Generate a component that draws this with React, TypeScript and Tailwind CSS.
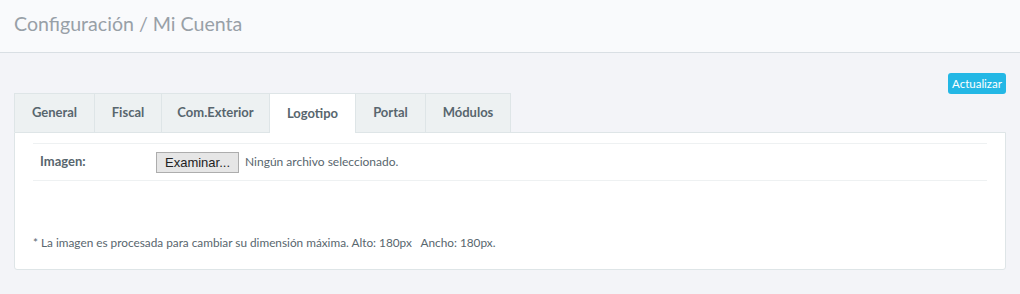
import React from 'react';

const tabs = [
  { name: 'General', w: 'w-[81px]' },
  { name: 'Fiscal', w: 'w-[67px]' },
  { name: 'Com.Exterior', w: 'w-[108px]' },
  { name: 'Logotipo', w: 'w-[86px]' },
  { name: 'Portal', w: 'w-[70px]' },
  { name: 'Módulos', w: 'w-[85px]' },
];

const App: React.FC = () => {
  const active = 'Logotipo';

  return (
    <div className="min-h-[294px] bg-[#f3f4f8] text-[#58666e]" style={{ fontFamily: '"Lato", "Liberation Sans", sans-serif' }}>
      <header className="h-[53px] bg-[#f9fafc] border-b border-[#d9dfe4] px-[14px] flex items-center">
        <h1 className="text-[19.6px] text-[#98a0a7] font-normal leading-none -mt-[4px]">Configuración / Mi Cuenta</h1>
      </header>

      <div className="px-[14px] pt-[20px]">
        <div className="flex justify-end">
          <button className="h-[21px] w-[58px] rounded-[3px] bg-[#23b7e5] text-white text-[11.5px] leading-none">Actualizar</button>
        </div>

        <div className="flex -mt-px">
          {tabs.map((t, i) => (
            <div
              key={t.name}
              className={`${t.w} h-[39px] flex items-center justify-center text-[13px] font-bold border-t border-r border-[#dee5e7] ${
                i === 0 ? 'border-l' : ''
              } ${t.name === active ? 'bg-white relative z-10 -mb-px h-[40px] text-[#58666e]' : 'bg-[#edf1f2] text-[#58666e]'}`}
            >
              {t.name}
            </div>
          ))}
        </div>

        <section className="bg-white border border-[#dee5e7] rounded-b-[3px] px-[18px] pt-[10px] pb-[17px]">
          <div className="border-t border-b border-[#eef1f2] h-[38px] flex items-center text-[13px]">
            <span className="w-[123px] pl-[7px] font-bold">Imagen:</span>
            <button className="h-[21px] w-[83px] border border-[#adadad] bg-[#e6e6e6] text-[#222] text-[13px] leading-none" style={{ fontFamily: '"Liberation Sans", sans-serif' }}>Examinar...</button>
            <span className="ml-[6px] text-[12px]">Ningún archivo seleccionado.</span>
          </div>
          <p className="mt-[53px] text-[11.8px]">* La imagen es procesada para cambiar su dimensión máxima. Alto: 180px&nbsp;&nbsp; Ancho: 180px.</p>
        </section>
      </div>
    </div>
  );
};

export default App;
